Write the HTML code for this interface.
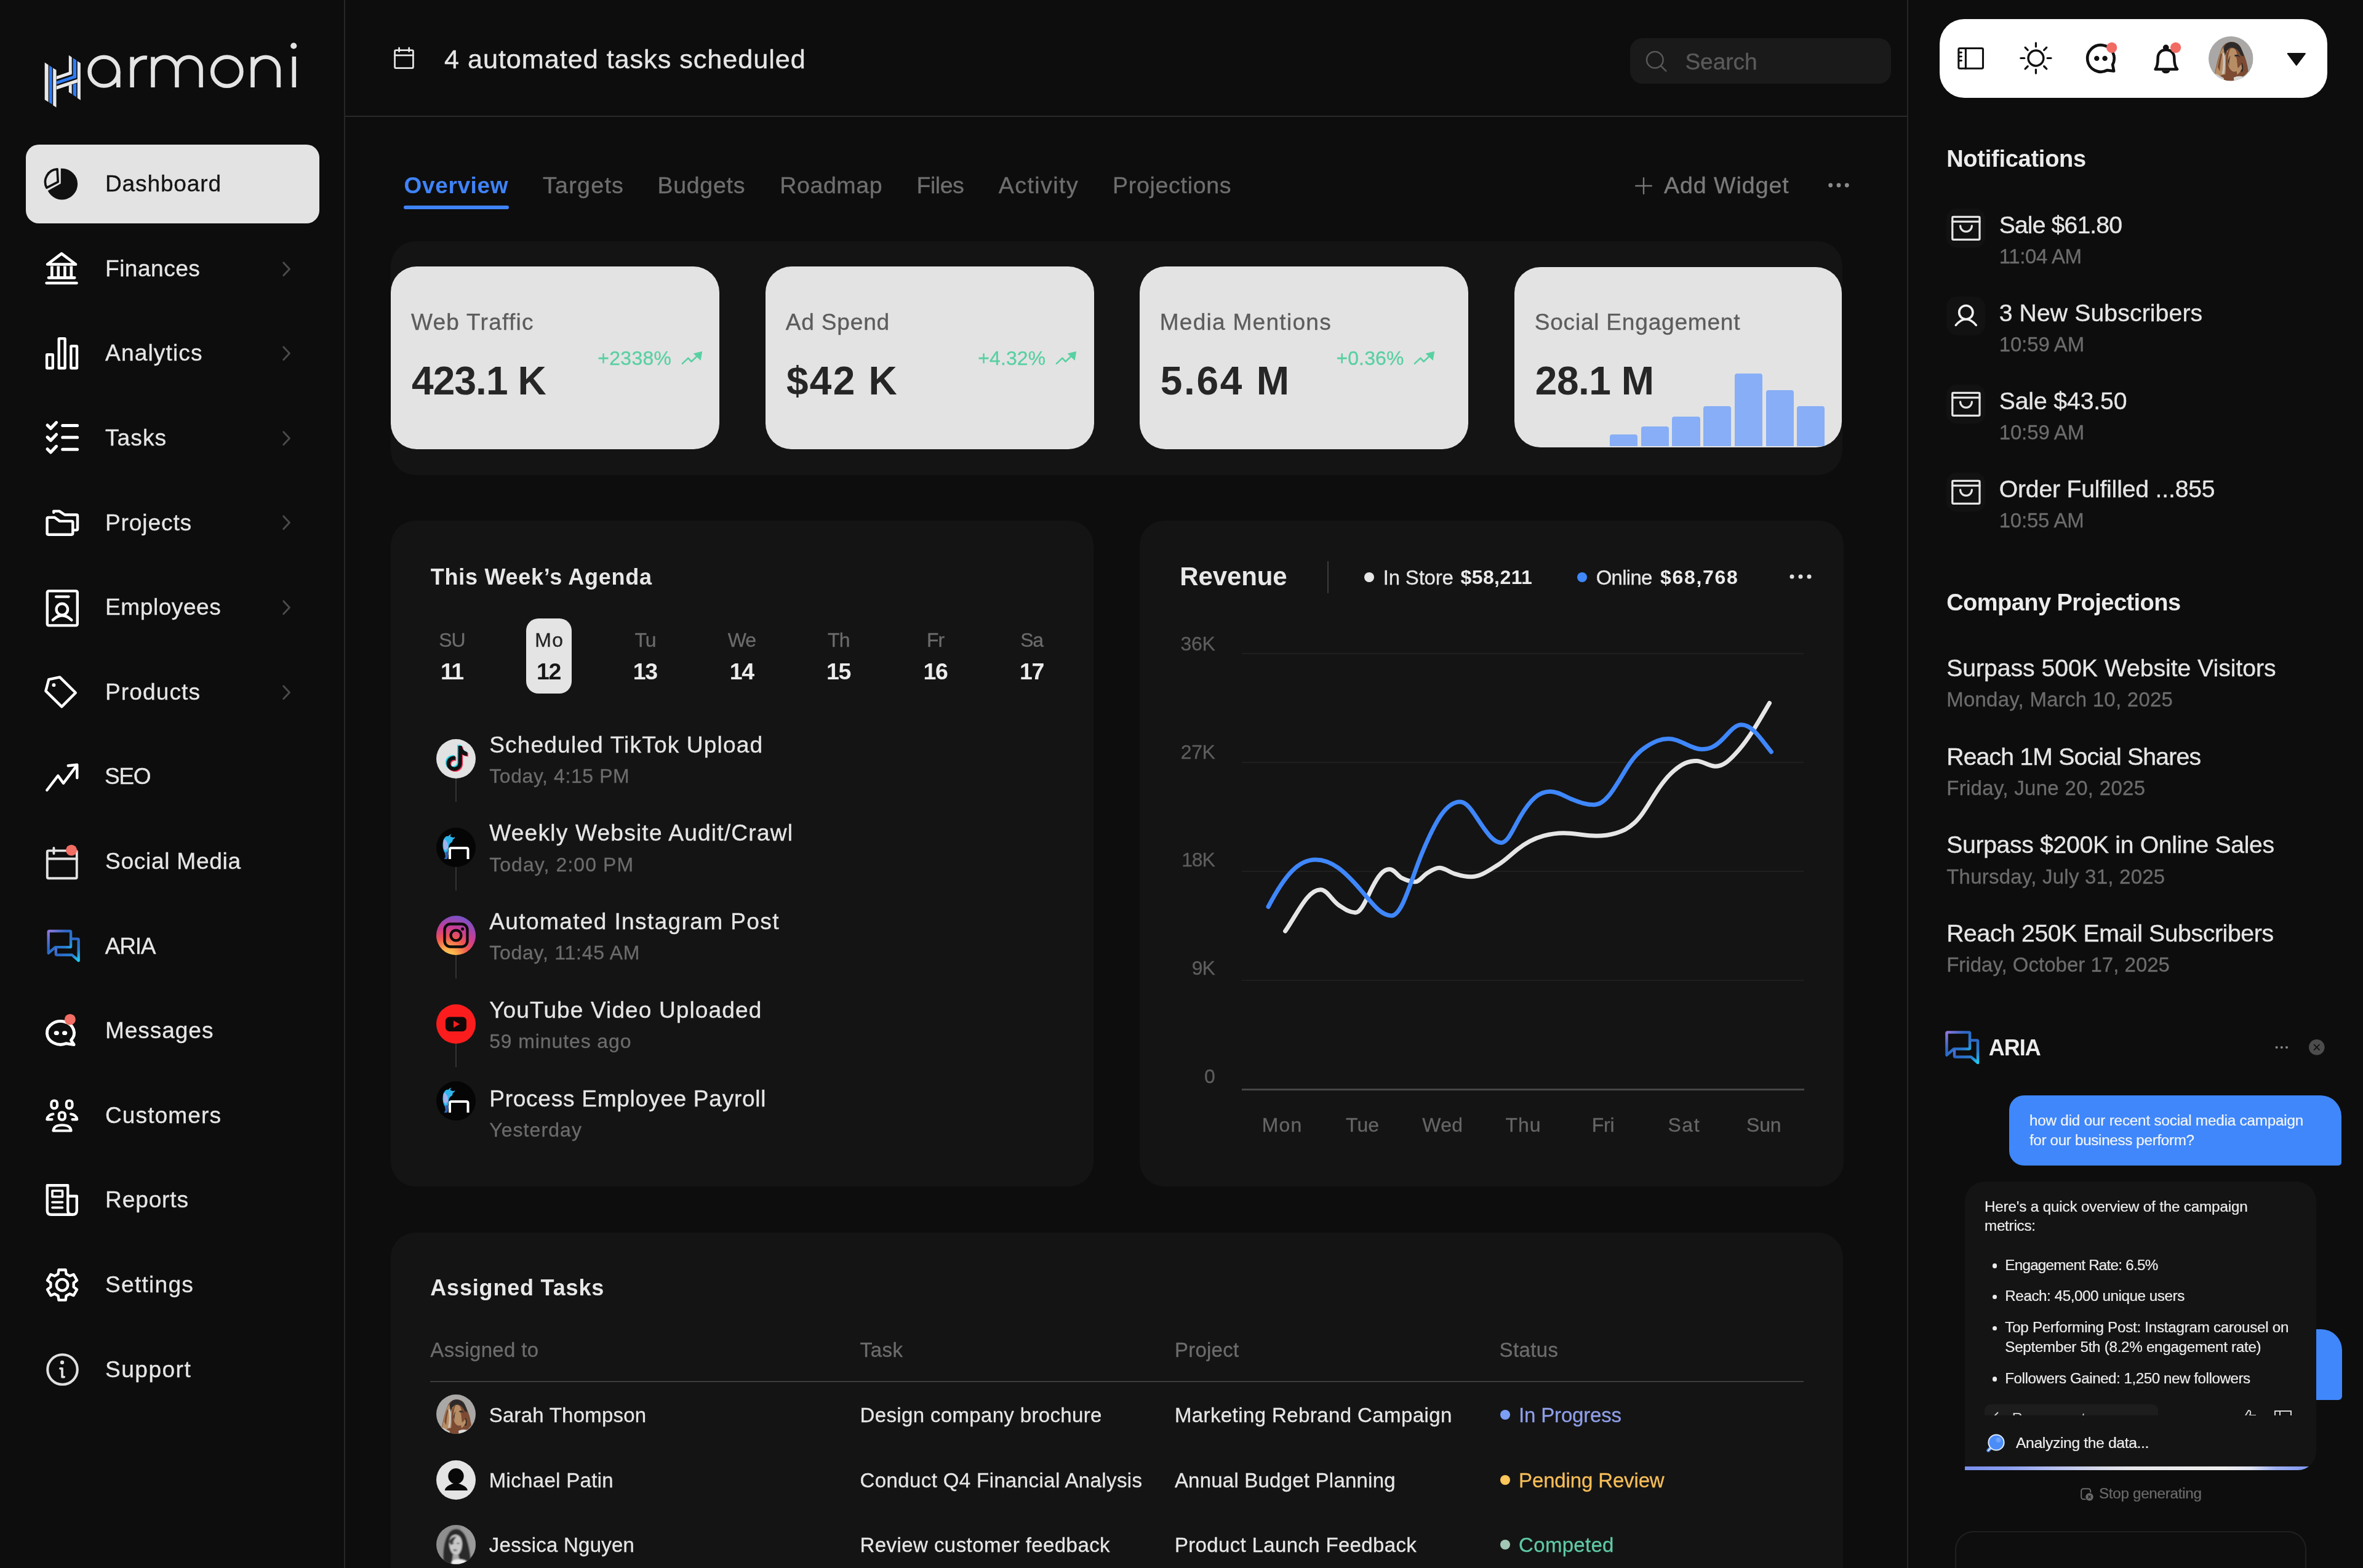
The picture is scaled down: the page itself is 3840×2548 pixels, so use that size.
<!DOCTYPE html><html lang="en"><head><meta charset="utf-8"><title>Harmoni Dashboard</title><style>
html{margin:0;padding:0;background:#0d0d0d;width:3840px;height:2548px;overflow:hidden;}
body{margin:0;padding:0;background:transparent;will-change:transform;width:3840px;height:2548px;overflow:hidden;position:relative;font-family:"Liberation Sans",sans-serif;}
.b{position:absolute;display:block;box-sizing:border-box;}
.t{position:absolute;display:block;white-space:nowrap;font-family:"Liberation Sans",sans-serif;font-weight:400;}
svg{overflow:visible;}
</style></head><body><aside id="sidebar"><div class="b" style="left:0;top:0;width:559px;height:2548px;border-right:2px solid #262626;box-sizing:content-box"></div><svg class="b" style="left:67.51px;top:65.39px;width:423.19px;height:114.26px;" viewBox="130 120 2000 540"><polygon points="152,293 180,311 180,596 152,578" fill="#e9e9e9"/><polygon points="186,315 209,330 209,614 186,600" fill="#2f7bf5"/><polygon points="216,335 241,351 241,638 216,622" fill="#e9e9e9"/><polygon points="337,237 360,252 360,372 337,380" fill="#e9e9e9"/><polygon points="337,470 360,462 360,535 337,520" fill="#e9e9e9"/><polygon points="369,258 395,275 395,398 369,407" fill="#2f7bf5"/><polygon points="369,462 395,454 395,558 369,542" fill="#2f7bf5"/><polygon points="403,282 427,297 427,582 403,566" fill="#e9e9e9"/><polygon points="243,398 360,358 360,383 243,423" fill="#e9e9e9"/><polygon points="243,437 395,386 395,411 243,462" fill="#2f7bf5"/><polygon points="243,473 403,420 403,447 243,500" fill="#e9e9e9"/><g fill="none" stroke="#e4e4e4" stroke-width="31"><circle cx="607" cy="362" r="110.5"/><path d="M717.5 362 V484"/><path d="M823 250 V484"/><path d="M823 351 A100 100 0 0 1 938 256"/><path d="M983 250 V484"/><path d="M983 343.5 A92 92 0 0 1 1167 343.5 V484"/><path d="M1167 343.5 A92.5 92.5 0 0 1 1352 343.5 V484"/><circle cx="1551.5" cy="362" r="111.5"/><path d="M1749 250 V484"/><path d="M1749 351 A100 100 0 0 1 1949 351 V484"/><path d="M2067 247 V484"/></g><circle cx="2064" cy="165" r="24" fill="#e4e4e4"/></svg><div class="b" style="left:42.4px;top:235px;width:476.6px;height:127.8px;background:#e3e3e3;border-radius:21px;"></div><svg class="b" style="left:72.12px;top:270.6px;width:58.15px;height:58.15px;" viewBox="50 85 240 240"><path d="M160.5 197.7 L160.5 96.6 A104.7 104.7 0 1 1 73.8 245.5 Z" fill="#111"/><path d="M141.6 186.3 L65.9 225.7 A85.3 85.3 0 0 1 137.1 101.1 Z" fill="none" stroke="#111" stroke-width="15" stroke-linejoin="round"/></svg><svg class="b" style="left:70.9px;top:406.77px;width:58.15px;height:58.15px;" viewBox="45 647 240 240"><g fill="none" stroke="#ffffff" stroke-width="19" stroke-linecap="round" stroke-linejoin="round"><path d="M70 740 L165 668 L260 740 Z"/><path d="M100 752 V822 M143 752 V822 M187 752 V822 M230 752 V822" stroke-linecap="butt"/><path d="M78 830 H252"/><path d="M64 866 H266"/></g></svg><svg class="b" style="left:70.9px;top:545.13px;width:58.15px;height:58.15px;" viewBox="45 1218 240 240"><g fill="none" stroke="#ffffff" stroke-width="18" stroke-linejoin="round"><rect x="66" y="1347" width="40" height="91" rx="3"/><rect x="147" y="1239" width="41" height="199" rx="3"/><rect x="228" y="1290" width="40" height="148" rx="3"/></g></svg><svg class="b" style="left:70.91px;top:680.61px;width:60.61px;height:60.61px;" viewBox="45 85 250 250"><g fill="none" stroke="#ffffff" stroke-width="21" stroke-linecap="round" stroke-linejoin="round"><path d="M70 126 L92 148 L130 108"/><path d="M172 128 H270"/><path d="M70 206 L92 228 L130 188"/><path d="M172 208 H270"/><path d="M70 286 L92 308 L130 268"/><path d="M172 288 H270"/></g></svg><svg class="b" style="left:70.91px;top:818.79px;width:60.61px;height:60.61px;" viewBox="45 655 250 250"><g fill="none" stroke="#ffffff" stroke-width="18" stroke-linecap="round" stroke-linejoin="round"><path d="M112 712 V703 H150 L186 727 H264 Q272 727 272 735 V822 Q272 830 264 830 H250"/><path d="M68 752 Q68 745 76 745 H118 L152 770 H232 Q240 770 240 778 V852 Q240 860 232 860 H76 Q68 860 68 852 Z"/></g></svg><svg class="b" style="left:70.91px;top:956.97px;width:60.61px;height:63.52px;" viewBox="45 1225 250 262"><g fill="none" stroke="#ffffff" stroke-width="18" stroke-linecap="round" stroke-linejoin="round"><rect x="69" y="1239" width="202" height="231" rx="10"/><path d="M128 1277 H212"/><circle cx="168" cy="1362" r="38"/><path d="M106 1434 Q168 1372 232 1434"/></g></svg><svg class="b" style="left:69.7px;top:1094.55px;width:60.61px;height:60.61px;" viewBox="40 60 250 250"><g fill="none" stroke="#ffffff" stroke-width="18" stroke-linecap="round" stroke-linejoin="round"><path d="M78 98 L152 82 L258 187 L165 280 L58 175 Z"/></g><circle cx="112" cy="135" r="12" fill="#ffffff"/></svg><svg class="b" style="left:69.7px;top:1235.15px;width:60.61px;height:60.61px;" viewBox="40 640 250 250"><g fill="none" stroke="#ffffff" stroke-width="18" stroke-linecap="round" stroke-linejoin="round"><path d="M66 842 L140 745 L176 796 L262 682"/><path d="M208 678 L268 672 L268 760"/></g></svg><svg class="b" style="left:69.7px;top:1369.7px;width:63.03px;height:63.03px;" viewBox="40 1195 260 260"><g fill="none" stroke="#e2e2e2" stroke-width="16" stroke-linecap="round" stroke-linejoin="round"><rect x="68" y="1246" width="198" height="185" rx="8"/><path d="M68 1300 H266"/><path d="M112 1228 V1265"/></g><circle cx="230" cy="1243" r="37" fill="#f26d63"/></svg><svg class="b" style="left:69.7px;top:1505.45px;width:65.45px;height:63.03px;" viewBox="40 105 270 260"><defs><linearGradient id="ag" x1="0" y1="0" x2="1" y2="1"><stop offset="0" stop-color="#9078da"/><stop offset=".4" stop-color="#2c66c6"/><stop offset=".75" stop-color="#2a7fd0"/><stop offset="1" stop-color="#1fcdf2"/></linearGradient></defs><g fill="none" stroke="url(#ag)" stroke-width="18" stroke-linejoin="round" stroke-linecap="round"><path d="M82 138 H220 Q226 138 226 144 V240 Q226 246 220 246 H122 L76 286 V144 Q76 138 82 138 Z"/><path d="M236 190 H272 Q278 190 278 196 V336 L234 298 H132 Q126 298 126 292 V258"/></g></svg><svg class="b" style="left:69.7px;top:1644.85px;width:63.03px;height:63.03px;" viewBox="40 680 260 260"><g fill="none" stroke="#ffffff" stroke-width="20" stroke-linecap="round" stroke-linejoin="round"><path d="M227.5 867.5 A91 78 0 1 0 195.5 888.7 L247 897 Z"/></g><ellipse cx="130" cy="819" rx="17" ry="14" fill="#ffffff"/><ellipse cx="185" cy="819" rx="17" ry="14" fill="#ffffff"/><circle cx="221" cy="728" r="37" fill="#f26d63"/></svg><svg class="b" style="left:69.7px;top:1781.82px;width:63.03px;height:60.61px;" viewBox="40 1245 260 250"><g fill="none" stroke="#ffffff" stroke-width="17" stroke-linecap="round" stroke-linejoin="round"><rect x="95" y="1272" width="40" height="52" rx="18"/><rect x="196" y="1272" width="40" height="52" rx="18"/><rect x="146" y="1350" width="42" height="50" rx="18"/><path d="M108 1362 Q72 1366 66 1398 H100"/><path d="M226 1362 Q262 1366 268 1398 H236"/><path d="M108 1474 Q112 1436 168 1436 Q224 1436 228 1474 Z"/></g></svg><svg class="b" style="left:69.7px;top:1919.09px;width:63.03px;height:63.03px;" viewBox="40 120 260 260"><g fill="none" stroke="#ffffff" stroke-width="18" stroke-linecap="round" stroke-linejoin="round"><path d="M68 150 H206 V318 Q206 346 236 346 H94 Q68 346 68 320 Z"/><path d="M206 222 H266 V318 Q266 346 236 346"/><rect x="102" y="186" width="68" height="40" stroke-width="15"/><path d="M102 263 H170 M102 299 H170" stroke-width="15"/></g></svg><svg class="b" style="left:69.7px;top:2057.27px;width:63.03px;height:63.03px;" viewBox="40 690 260 260"><g fill="none" stroke="#ffffff" stroke-width="18" stroke-linejoin="round"><path d="M195.0 891.2 L191.0 919.4 L145.0 919.4 L141.0 891.2 L118.1 878.0 L91.6 888.6 L68.7 848.8 L91.1 831.2 L91.1 804.8 L68.7 787.2 L91.6 747.4 L118.1 758.0 L141.0 744.8 L145.0 716.6 L191.0 716.6 L195.0 744.8 L217.9 758.0 L244.4 747.4 L267.3 787.2 L244.9 804.8 L244.9 831.2 L267.3 848.8 L244.4 888.6 L217.9 878.0Z"/><circle cx="168" cy="818" r="38"/></g></svg><svg class="b" style="left:69.7px;top:2195.45px;width:63.03px;height:63.03px;" viewBox="40 1260 260 260"><circle cx="170" cy="1386" r="100" fill="none" stroke="#e0e0e0" stroke-width="17"/><circle cx="168" cy="1338" r="13" fill="#e0e0e0"/><path d="M155 1379 H168 V1436 H181" fill="none" stroke="#e0e0e0" stroke-width="15" stroke-linecap="round" stroke-linejoin="round"/></svg><span class="t" style="left:171px;top:275.14px;font-size:37.08px;line-height:46px;color:#141414;-webkit-text-stroke:0.33px;letter-spacing:0.83px;">Dashboard</span><span class="t" style="left:171px;top:412.74px;font-size:37.08px;line-height:46px;color:#e6e6e6;-webkit-text-stroke:0.33px;letter-spacing:0.49px;">Finances</span><svg class="b" style="left:452px;top:415.6px;width:30px;height:40px;" viewBox="0 0 30 40"><path d="M8.8 10.9 L18.4 21.25 L8.8 31.6" fill="none" stroke="#4a4a4a" stroke-width="3" stroke-linecap="round" stroke-linejoin="round"/></svg><span class="t" style="left:171px;top:550.34px;font-size:37.08px;line-height:46px;color:#e6e6e6;-webkit-text-stroke:0.33px;letter-spacing:1.15px;">Analytics</span><svg class="b" style="left:452px;top:553.2px;width:30px;height:40px;" viewBox="0 0 30 40"><path d="M8.8 10.9 L18.4 21.25 L8.8 31.6" fill="none" stroke="#4a4a4a" stroke-width="3" stroke-linecap="round" stroke-linejoin="round"/></svg><span class="t" style="left:171px;top:687.94px;font-size:37.08px;line-height:46px;color:#e6e6e6;-webkit-text-stroke:0.33px;letter-spacing:1.07px;">Tasks</span><svg class="b" style="left:452px;top:690.8px;width:30px;height:40px;" viewBox="0 0 30 40"><path d="M8.8 10.9 L18.4 21.25 L8.8 31.6" fill="none" stroke="#4a4a4a" stroke-width="3" stroke-linecap="round" stroke-linejoin="round"/></svg><span class="t" style="left:171px;top:825.54px;font-size:37.08px;line-height:46px;color:#e6e6e6;-webkit-text-stroke:0.33px;letter-spacing:0.88px;">Projects</span><svg class="b" style="left:452px;top:828.4px;width:30px;height:40px;" viewBox="0 0 30 40"><path d="M8.8 10.9 L18.4 21.25 L8.8 31.6" fill="none" stroke="#4a4a4a" stroke-width="3" stroke-linecap="round" stroke-linejoin="round"/></svg><span class="t" style="left:171px;top:963.14px;font-size:37.08px;line-height:46px;color:#e6e6e6;-webkit-text-stroke:0.33px;letter-spacing:0.55px;">Employees</span><svg class="b" style="left:452px;top:966px;width:30px;height:40px;" viewBox="0 0 30 40"><path d="M8.8 10.9 L18.4 21.25 L8.8 31.6" fill="none" stroke="#4a4a4a" stroke-width="3" stroke-linecap="round" stroke-linejoin="round"/></svg><span class="t" style="left:171px;top:1100.74px;font-size:37.08px;line-height:46px;color:#e6e6e6;-webkit-text-stroke:0.33px;letter-spacing:1.1px;">Products</span><svg class="b" style="left:452px;top:1103.6px;width:30px;height:40px;" viewBox="0 0 30 40"><path d="M8.8 10.9 L18.4 21.25 L8.8 31.6" fill="none" stroke="#4a4a4a" stroke-width="3" stroke-linecap="round" stroke-linejoin="round"/></svg><span class="t" style="left:169.94px;top:1238.34px;font-size:37.08px;line-height:46px;color:#e6e6e6;-webkit-text-stroke:0.33px;letter-spacing:-1.3px;">SEO</span><span class="t" style="left:171px;top:1375.94px;font-size:37.08px;line-height:46px;color:#e6e6e6;-webkit-text-stroke:0.33px;letter-spacing:0.72px;">Social Media</span><span class="t" style="left:170.73px;top:1513.54px;font-size:37.08px;line-height:46px;color:#e6e6e6;-webkit-text-stroke:0.33px;letter-spacing:-1.3px;">ARIA</span><span class="t" style="left:171px;top:1651.14px;font-size:37.08px;line-height:46px;color:#e6e6e6;-webkit-text-stroke:0.33px;letter-spacing:0.92px;">Messages</span><span class="t" style="left:171px;top:1788.74px;font-size:37.08px;line-height:46px;color:#e6e6e6;-webkit-text-stroke:0.33px;letter-spacing:1.09px;">Customers</span><span class="t" style="left:171px;top:1926.34px;font-size:37.08px;line-height:46px;color:#e6e6e6;-webkit-text-stroke:0.33px;letter-spacing:0.87px;">Reports</span><span class="t" style="left:171px;top:2063.94px;font-size:37.08px;line-height:46px;color:#e6e6e6;-webkit-text-stroke:0.33px;letter-spacing:1.27px;">Settings</span><span class="t" style="left:171px;top:2201.54px;font-size:37.08px;line-height:46px;color:#e6e6e6;-webkit-text-stroke:0.33px;letter-spacing:1.47px;">Support</span></aside><header id="top"><svg class="b" style="left:636.76px;top:73.52px;width:39.61px;height:41.13px;" viewBox="55 110 130 135"><g fill="none" stroke="#e6e6e6" stroke-width="9" stroke-linejoin="round" stroke-linecap="round"><rect x="70" y="135" width="98" height="95" rx="6"/><path d="M70 162 H168"/><path d="M93 123 V142 M146 123 V142"/></g></svg><span class="t" style="left:722px;top:68.52px;font-size:43.26px;line-height:54px;color:#e6e6e6;-webkit-text-stroke:0.39px;letter-spacing:0.93px;">4 automated tasks scheduled</span><div class="b" style="left:561px;top:188.2px;width:2539px;height:2px;background:#2a2a2a;"></div><div class="b" style="left:2648.9px;top:62.3px;width:423.7px;height:74.2px;background:#1a1a1a;border-radius:20px;"></div><svg class="b" style="left:2674px;top:82px;width:36px;height:36px;" viewBox="0 0 36 36"><circle cx="15.3" cy="15.3" r="13.3" fill="none" stroke="#585858" stroke-width="2.5"/><path d="M25 25 L33.3 33.3" stroke="#585858" stroke-width="2.5" stroke-linecap="round"/></svg><span class="t" style="left:2738.4px;top:76.54px;font-size:37.08px;line-height:46px;color:#5a5a5a;-webkit-text-stroke:0.33px;letter-spacing:-0.05px;">Search</span><span class="t" style="left:656.6px;top:278.94px;font-size:37px;line-height:46px;color:#3f83f8;font-weight:700;letter-spacing:0.62px;">Overview</span><span class="t" style="left:882px;top:278.45px;font-size:37.59px;line-height:47px;color:#6e6e6e;-webkit-text-stroke:0.34px;letter-spacing:1.28px;">Targets</span><span class="t" style="left:1068.4px;top:278.45px;font-size:37.59px;line-height:47px;color:#6e6e6e;-webkit-text-stroke:0.34px;letter-spacing:0.7px;">Budgets</span><span class="t" style="left:1267.3px;top:278.45px;font-size:37.59px;line-height:47px;color:#6e6e6e;-webkit-text-stroke:0.34px;letter-spacing:0.55px;">Roadmap</span><span class="t" style="left:1489.4px;top:278.45px;font-size:37.59px;line-height:47px;color:#6e6e6e;-webkit-text-stroke:0.34px;letter-spacing:-0.46px;">Files</span><span class="t" style="left:1622.7px;top:278.45px;font-size:37.59px;line-height:47px;color:#6e6e6e;-webkit-text-stroke:0.34px;letter-spacing:1.43px;">Activity</span><span class="t" style="left:1808.1px;top:278.45px;font-size:37.59px;line-height:47px;color:#6e6e6e;-webkit-text-stroke:0.34px;letter-spacing:0.66px;">Projections</span><div class="b" style="left:656px;top:334px;width:171px;height:5.6px;background:#3f83f8;border-radius:3px;"></div><svg class="b" style="left:2657px;top:287.5px;width:28px;height:28px;" viewBox="0 0 28 28"><path d="M14 1.2 V26.8 M1.2 14 H26.8" stroke="#777" stroke-width="2.4" stroke-linecap="round"/></svg><span class="t" style="left:2704px;top:278.05px;font-size:37.59px;line-height:47px;color:#7a7a7a;-webkit-text-stroke:0.34px;letter-spacing:0.95px;">Add Widget</span><svg class="b" style="left:2970px;top:295.2px;width:38px;height:12px;" viewBox="0 0 38 12"><circle cx="4.7" cy="6" r="3.4" fill="#8c8c8c"/><circle cx="18" cy="6" r="3.4" fill="#8c8c8c"/><circle cx="31.3" cy="6" r="3.4" fill="#8c8c8c"/></svg><div class="b" style="left:634.5px;top:391.5px;width:2359.5px;height:380.5px;background:#141414;border-radius:40px;"></div><div class="b" style="left:634.7px;top:433.3px;width:534.6px;height:296.4px;background:#e3e3e3;border-radius:42px;"></div><span class="t" style="left:667.9px;top:500.44px;font-size:37.08px;line-height:46px;color:#5c5c5c;-webkit-text-stroke:0.33px;letter-spacing:1.25px;">Web Traffic</span><span class="t" style="left:669px;top:579.37px;font-size:64px;line-height:80px;color:#262626;font-weight:700;letter-spacing:-0.89px;">423.1 K</span><span class="t" style="left:971.3px;top:561.78px;font-size:31.93px;line-height:40px;color:#58d0a2;-webkit-text-stroke:0.29px;letter-spacing:0.31px;">+2338%</span><svg class="b" style="left:1106.5px;top:570px;width:36px;height:24px;" viewBox="2014 632 151.91 101.27"><path d="M2022 720 L2062 682 L2084 706 L2128 664" fill="none" stroke="#58d0a2" stroke-width="11" stroke-linecap="round" stroke-linejoin="round"/><path d="M2100 652 L2156 638 L2146 696 Z" fill="#58d0a2" stroke="#58d0a2" stroke-width="4" stroke-linejoin="round"/></svg><div class="b" style="left:1243.6px;top:433.3px;width:534.6px;height:296.4px;background:#e3e3e3;border-radius:42px;"></div><span class="t" style="left:1276.8px;top:500.44px;font-size:37.08px;line-height:46px;color:#5c5c5c;-webkit-text-stroke:0.33px;letter-spacing:0.79px;">Ad Spend</span><span class="t" style="left:1277.9px;top:579.37px;font-size:64px;line-height:80px;color:#262626;font-weight:700;letter-spacing:2.28px;">$42 K</span><span class="t" style="left:1589.2px;top:561.78px;font-size:31.93px;line-height:40px;color:#58d0a2;-webkit-text-stroke:0.29px;letter-spacing:0.16px;">+4.32%</span><svg class="b" style="left:1714.7px;top:570px;width:36px;height:24px;" viewBox="2014 632 151.91 101.27"><path d="M2022 720 L2062 682 L2084 706 L2128 664" fill="none" stroke="#58d0a2" stroke-width="11" stroke-linecap="round" stroke-linejoin="round"/><path d="M2100 652 L2156 638 L2146 696 Z" fill="#58d0a2" stroke="#58d0a2" stroke-width="4" stroke-linejoin="round"/></svg><div class="b" style="left:1851.5px;top:433.3px;width:534.6px;height:296.4px;background:#e3e3e3;border-radius:42px;"></div><span class="t" style="left:1884.7px;top:500.44px;font-size:37.08px;line-height:46px;color:#5c5c5c;-webkit-text-stroke:0.33px;letter-spacing:1.25px;">Media Mentions</span><span class="t" style="left:1885.8px;top:579.37px;font-size:64px;line-height:80px;color:#262626;font-weight:700;letter-spacing:2.7px;">5.64 M</span><span class="t" style="left:2171.4px;top:561.78px;font-size:31.93px;line-height:40px;color:#58d0a2;-webkit-text-stroke:0.29px;letter-spacing:0.16px;">+0.36%</span><svg class="b" style="left:2296.9px;top:570px;width:36px;height:24px;" viewBox="2014 632 151.91 101.27"><path d="M2022 720 L2062 682 L2084 706 L2128 664" fill="none" stroke="#58d0a2" stroke-width="11" stroke-linecap="round" stroke-linejoin="round"/><path d="M2100 652 L2156 638 L2146 696 Z" fill="#58d0a2" stroke="#58d0a2" stroke-width="4" stroke-linejoin="round"/></svg><div class="b" style="left:2461.3px;top:434px;width:531.5px;height:293.4px;background:#e3e3e3;border-radius:42px;"></div><span class="t" style="left:2493.7px;top:500.44px;font-size:37.08px;line-height:46px;color:#5c5c5c;-webkit-text-stroke:0.33px;letter-spacing:0.77px;">Social Engagement</span><span class="t" style="left:2494.8px;top:579.37px;font-size:64px;line-height:80px;color:#262626;font-weight:700;letter-spacing:-0.5px;">28.1 M</span><div class="b" style="left:2616px;top:705.8px;width:45.3px;height:18.8px;background:#87aef6;border-radius:4px 4px 0 0;"></div><div class="b" style="left:2666.7px;top:692.6px;width:45.3px;height:32px;background:#87aef6;border-radius:4px 4px 0 0;"></div><div class="b" style="left:2717.4px;top:676.7px;width:45.3px;height:47.9px;background:#87aef6;border-radius:4px 4px 0 0;"></div><div class="b" style="left:2768.1px;top:660.2px;width:45.3px;height:64.4px;background:#87aef6;border-radius:4px 4px 0 0;"></div><div class="b" style="left:2818.8px;top:606.8px;width:45.3px;height:117.8px;background:#87aef6;border-radius:4px 4px 0 0;"></div><div class="b" style="left:2869.5px;top:633.8px;width:45.3px;height:90.8px;background:#87aef6;border-radius:4px 4px 0 0;"></div><div class="b" style="left:2920.2px;top:660.2px;width:45.3px;height:64.4px;background:#87aef6;border-radius:4px 4px 0 0;"></div></header><main id="content"><div class="b" style="left:634.5px;top:846px;width:1142.5px;height:1081.7px;background:#141414;border-radius:40px;"></div><span class="t" style="left:699.8px;top:915.03px;font-size:36px;line-height:45px;color:#e8e8e8;font-weight:700;letter-spacing:0.73px;">This Week’s Agenda</span><div class="b" style="left:855.2px;top:1004.9px;width:74px;height:122.5px;background:#e4e4e4;border-radius:20px;"></div><span class="t" style="left:713.37px;top:1020.28px;font-size:31.93px;line-height:40px;color:#6c6c6c;-webkit-text-stroke:0.29px;letter-spacing:-1.12px;">SU</span><span class="t" style="left:715.88px;top:1067.65px;font-size:37.5px;line-height:47px;color:#ececec;font-weight:700;letter-spacing:-1.31px;">11</span><span class="t" style="left:869.35px;top:1020.28px;font-size:31.93px;line-height:40px;color:#222;-webkit-text-stroke:0.29px;letter-spacing:1.32px;">Mo</span><span class="t" style="left:872.04px;top:1067.65px;font-size:37.5px;line-height:47px;color:#161616;font-weight:700;letter-spacing:-1.31px;">12</span><span class="t" style="left:1031.52px;top:1020.28px;font-size:31.93px;line-height:40px;color:#6c6c6c;-webkit-text-stroke:0.29px;letter-spacing:-1.12px;">Tu</span><span class="t" style="left:1028.84px;top:1067.65px;font-size:37.5px;line-height:47px;color:#ececec;font-weight:700;letter-spacing:-1.31px;">13</span><span class="t" style="left:1182.73px;top:1020.28px;font-size:31.93px;line-height:40px;color:#6c6c6c;-webkit-text-stroke:0.29px;letter-spacing:-1.12px;">We</span><span class="t" style="left:1185.64px;top:1067.65px;font-size:37.5px;line-height:47px;color:#ececec;font-weight:700;letter-spacing:-1.31px;">14</span><span class="t" style="left:1344.9px;top:1020.28px;font-size:31.93px;line-height:40px;color:#6c6c6c;-webkit-text-stroke:0.29px;letter-spacing:-0.6px;">Th</span><span class="t" style="left:1343.04px;top:1067.65px;font-size:37.5px;line-height:47px;color:#ececec;font-weight:700;letter-spacing:-1.31px;">15</span><span class="t" style="left:1506.07px;top:1020.28px;font-size:31.93px;line-height:40px;color:#6c6c6c;-webkit-text-stroke:0.29px;letter-spacing:-1.12px;">Fr</span><span class="t" style="left:1500.44px;top:1067.65px;font-size:37.5px;line-height:47px;color:#ececec;font-weight:700;letter-spacing:-1.31px;">16</span><span class="t" style="left:1658.2px;top:1020.28px;font-size:31.93px;line-height:40px;color:#6c6c6c;-webkit-text-stroke:0.29px;letter-spacing:-1.12px;">Sa</span><span class="t" style="left:1657.04px;top:1067.65px;font-size:37.5px;line-height:47px;color:#ececec;font-weight:700;letter-spacing:-1.31px;">17</span><span class="t" style="left:795.2px;top:1186.54px;font-size:37.08px;line-height:46px;color:#e6e6e6;-webkit-text-stroke:0.33px;letter-spacing:1.16px;">Scheduled TikTok Upload</span><span class="t" style="left:795.2px;top:1240.78px;font-size:31.93px;line-height:40px;color:#6c6c6c;-webkit-text-stroke:0.29px;letter-spacing:0.62px;">Today, 4:15 PM</span><div class="b" style="left:739.8px;top:1265.1px;width:2.1px;height:37.5px;background:#343434;"></div><span class="t" style="left:795.2px;top:1330.39px;font-size:37.08px;line-height:46px;color:#e6e6e6;-webkit-text-stroke:0.33px;letter-spacing:1.22px;">Weekly Website Audit/Crawl</span><span class="t" style="left:795.2px;top:1384.63px;font-size:31.93px;line-height:40px;color:#6c6c6c;-webkit-text-stroke:0.29px;letter-spacing:1.11px;">Today, 2:00 PM</span><div class="b" style="left:739.8px;top:1409.2px;width:2.1px;height:37.5px;background:#343434;"></div><span class="t" style="left:795.2px;top:1474.24px;font-size:37.08px;line-height:46px;color:#e6e6e6;-webkit-text-stroke:0.33px;letter-spacing:1.36px;">Automated Instagram Post</span><span class="t" style="left:795.2px;top:1528.48px;font-size:31.93px;line-height:40px;color:#6c6c6c;-webkit-text-stroke:0.29px;letter-spacing:0.79px;">Today, 11:45 AM</span><div class="b" style="left:739.8px;top:1552.4px;width:2.1px;height:37.5px;background:#343434;"></div><span class="t" style="left:795.2px;top:1618.09px;font-size:37.08px;line-height:46px;color:#e6e6e6;-webkit-text-stroke:0.33px;letter-spacing:1.09px;">YouTube Video Uploaded</span><span class="t" style="left:795.2px;top:1672.33px;font-size:31.93px;line-height:40px;color:#6c6c6c;-webkit-text-stroke:0.29px;letter-spacing:0.92px;">59 minutes ago</span><div class="b" style="left:739.8px;top:1696.2px;width:2.1px;height:37.5px;background:#343434;"></div><span class="t" style="left:795.2px;top:1761.94px;font-size:37.08px;line-height:46px;color:#e6e6e6;-webkit-text-stroke:0.33px;letter-spacing:0.72px;">Process Employee Payroll</span><span class="t" style="left:795.2px;top:1816.18px;font-size:31.93px;line-height:40px;color:#6c6c6c;-webkit-text-stroke:0.29px;letter-spacing:1.11px;">Yesterday</span><svg class="b" style="left:708.6px;top:1201.1px;width:64px;height:64px;" viewBox="0 0 64 64"><circle cx="32" cy="32" r="32" fill="#e2e2e2"/><g transform="translate(32 32.6) scale(1.14) translate(-33 -31.5)"><path d="M36.3 12.5 h5.2 c0.4 4.6 3 8 7.6 8.8 v5.4 c-2.9 0 -5.5 -0.9 -7.6 -2.4 v12.6 c0 6.6 -5 11.3 -11.2 11.3 c-6.2 0 -10.8 -4.8 -10.8 -10.6 c0 -6.6 5.6 -11.4 12.4 -10.5 v5.6 c-3.4 -0.9 -6.9 1.2 -6.9 4.9 c0 3 2.4 5.2 5.2 5.2 c3.2 0 5.9 -2.3 5.9 -6 z" fill="#25d8ee" transform="translate(-1.5,-1.2)"/><path d="M36.3 12.5 h5.2 c0.4 4.6 3 8 7.6 8.8 v5.4 c-2.9 0 -5.5 -0.9 -7.6 -2.4 v12.6 c0 6.6 -5 11.3 -11.2 11.3 c-6.2 0 -10.8 -4.8 -10.8 -10.6 c0 -6.6 5.6 -11.4 12.4 -10.5 v5.6 c-3.4 -0.9 -6.9 1.2 -6.9 4.9 c0 3 2.4 5.2 5.2 5.2 c3.2 0 5.9 -2.3 5.9 -6 z" fill="#fb2c53" transform="translate(1.3,1.3)"/><path d="M36.3 12.5 h5.2 c0.4 4.6 3 8 7.6 8.8 v5.4 c-2.9 0 -5.5 -0.9 -7.6 -2.4 v12.6 c0 6.6 -5 11.3 -11.2 11.3 c-6.2 0 -10.8 -4.8 -10.8 -10.6 c0 -6.6 5.6 -11.4 12.4 -10.5 v5.6 c-3.4 -0.9 -6.9 1.2 -6.9 4.9 c0 3 2.4 5.2 5.2 5.2 c3.2 0 5.9 -2.3 5.9 -6 z" fill="#111"/></g></svg><svg class="b" style="left:708.6px;top:1345.2px;width:64px;height:64px;" viewBox="0 0 64 64"><circle cx="32" cy="32" r="32" fill="#050505"/><path d="M22 51 V35.5 Q22 33 24.5 33 H49 Q51.5 33 51.5 35.5 V51" fill="none" stroke="#fff" stroke-width="4"/><path d="M13 17 L16 14 L20 13.5 Q21 11 25 10.5 Q22 12.5 23 14.5 L27 16 Q29.5 16 30 14.5 Q30.5 18 27 19 L26 23 L22.5 25.5 L20.5 29 L20 33 L19 38 L19.5 43 L18 50.5 L13 51 L15 47 L14 41 Q10.5 36 10.5 28 Q10.5 21 13 17 Z" fill="#2fb5ea"/><path d="M12 20 Q10.5 27 12 34 L15.5 37 L19.5 32 L18.5 25 L14.5 19 Z" fill="#9fb3ef"/><path d="M14.5 40 L19.5 38.5 L19.5 43 L18 50.5 L13 51 L15 47 Z" fill="#2d62b8"/></svg><svg class="b" style="left:708.6px;top:1488.4px;width:64px;height:64px;" viewBox="0 0 64 64"><defs><radialGradient id="ig1" cx="0.3" cy="1.07" r="1.25"><stop offset="0" stop-color="#fdd86a"/><stop offset=".18" stop-color="#fbb04a"/><stop offset=".42" stop-color="#f0544f"/><stop offset=".62" stop-color="#c93c93"/><stop offset=".85" stop-color="#7f50c4"/><stop offset="1" stop-color="#5b62d8"/></radialGradient></defs><circle cx="32" cy="32" r="32" fill="url(#ig1)"/><rect x="13.5" y="13.5" width="37" height="37" rx="9.5" fill="none" stroke="#0c0c0c" stroke-width="4.4"/><circle cx="32" cy="32" r="8.4" fill="none" stroke="#0c0c0c" stroke-width="4.4"/><circle cx="42.6" cy="21.6" r="2.6" fill="#0c0c0c"/></svg><svg class="b" style="left:708.6px;top:1632.2px;width:64px;height:64px;" viewBox="0 0 64 64"><circle cx="32" cy="32" r="32" fill="#fb1d1d"/><rect x="15" y="20.5" width="34" height="23.5" rx="6.5" fill="#120808"/><path d="M28 26.5 L38 32.2 L28 38 Z" fill="#fb1d1d"/></svg><svg class="b" style="left:708.6px;top:1757.1px;width:64px;height:64px;" viewBox="0 0 64 64"><circle cx="32" cy="32" r="32" fill="#050505"/><path d="M22 51 V35.5 Q22 33 24.5 33 H49 Q51.5 33 51.5 35.5 V51" fill="none" stroke="#fff" stroke-width="4"/><path d="M13 17 L16 14 L20 13.5 Q21 11 25 10.5 Q22 12.5 23 14.5 L27 16 Q29.5 16 30 14.5 Q30.5 18 27 19 L26 23 L22.5 25.5 L20.5 29 L20 33 L19 38 L19.5 43 L18 50.5 L13 51 L15 47 L14 41 Q10.5 36 10.5 28 Q10.5 21 13 17 Z" fill="#2fb5ea"/><path d="M12 20 Q10.5 27 12 34 L15.5 37 L19.5 32 L18.5 25 L14.5 19 Z" fill="#9fb3ef"/><path d="M14.5 40 L19.5 38.5 L19.5 43 L18 50.5 L13 51 L15 47 Z" fill="#2d62b8"/></svg><div class="b" style="left:1852px;top:846px;width:1143.5px;height:1081.7px;background:#141414;border-radius:40px;"></div><span class="t" style="left:1917.2px;top:911.2px;font-size:42px;line-height:52px;color:#e8e8e8;font-weight:700;letter-spacing:-0.09px;">Revenue</span><div class="b" style="left:2156.8px;top:911.5px;width:2.4px;height:52.5px;background:#3c3c3c;"></div><div class="b" style="left:2217.4px;top:930.2px;width:16px;height:16px;background:#e6e6e6;border-radius:8px;"></div><span class="t" style="left:2247.8px;top:917.8px;font-size:32.96px;line-height:41px;color:#e6e6e6;-webkit-text-stroke:0.3px;letter-spacing:-0.19px;">In Store</span><span class="t" style="left:2373.5px;top:918.28px;font-size:32px;line-height:40px;color:#ececec;font-weight:700;letter-spacing:0.41px;">$58,211</span><div class="b" style="left:2563.3px;top:930.2px;width:16px;height:16px;background:#3f87fb;border-radius:8px;"></div><span class="t" style="left:2593.7px;top:917.8px;font-size:32.96px;line-height:41px;color:#e6e6e6;-webkit-text-stroke:0.3px;letter-spacing:-0.71px;">Online</span><span class="t" style="left:2698px;top:918.28px;font-size:32px;line-height:40px;color:#ececec;font-weight:700;letter-spacing:1.67px;">$68,768</span><svg class="b" style="left:2907px;top:931px;width:38px;height:12px;" viewBox="0 0 38 12"><circle cx="5" cy="6" r="3.5" fill="#e0e0e0"/><circle cx="19" cy="6" r="3.5" fill="#e0e0e0"/><circle cx="33" cy="6" r="3.5" fill="#e0e0e0"/></svg><span class="t" style="left:1918.5px;top:1026.28px;font-size:31.93px;line-height:40px;color:#5e5e5e;-webkit-text-stroke:0.29px;letter-spacing:-0.27px;">36K</span><span class="t" style="left:1918.8px;top:1201.68px;font-size:31.93px;line-height:40px;color:#5e5e5e;-webkit-text-stroke:0.29px;letter-spacing:-0.42px;">27K</span><span class="t" style="left:1920.2px;top:1377.38px;font-size:31.93px;line-height:40px;color:#5e5e5e;-webkit-text-stroke:0.29px;letter-spacing:-1.12px;">18K</span><span class="t" style="left:1936.8px;top:1552.88px;font-size:31.93px;line-height:40px;color:#5e5e5e;-webkit-text-stroke:0.29px;letter-spacing:-1.12px;">9K</span><span class="t" style="left:1957.08px;top:1728.58px;font-size:31.93px;line-height:40px;color:#5e5e5e;-webkit-text-stroke:0.29px;">0</span><div class="b" style="left:2018px;top:1061px;width:913px;height:2px;background:#1f1f1f;"></div><div class="b" style="left:2018px;top:1238.2px;width:913px;height:2px;background:#1f1f1f;"></div><div class="b" style="left:2018px;top:1415px;width:913px;height:2px;background:#1f1f1f;"></div><div class="b" style="left:2018px;top:1592px;width:913px;height:2px;background:#1f1f1f;"></div><div class="b" style="left:2018px;top:1769.4px;width:913.8px;height:2.2px;background:#464646;"></div><span class="t" style="left:2050.75px;top:1808.48px;font-size:31.93px;line-height:40px;color:#666;-webkit-text-stroke:0.29px;letter-spacing:1.2px;">Mon</span><span class="t" style="left:2187px;top:1808.48px;font-size:31.93px;line-height:40px;color:#666;-webkit-text-stroke:0.29px;letter-spacing:0.1px;">Tue</span><span class="t" style="left:2311.2px;top:1808.48px;font-size:31.93px;line-height:40px;color:#666;-webkit-text-stroke:0.29px;letter-spacing:0.43px;">Wed</span><span class="t" style="left:2446.5px;top:1808.48px;font-size:31.93px;line-height:40px;color:#666;-webkit-text-stroke:0.29px;letter-spacing:0.96px;">Thu</span><span class="t" style="left:2586.7px;top:1808.48px;font-size:31.93px;line-height:40px;color:#666;-webkit-text-stroke:0.29px;letter-spacing:-0.1px;">Fri</span><span class="t" style="left:2710.5px;top:1808.48px;font-size:31.93px;line-height:40px;color:#666;-webkit-text-stroke:0.29px;letter-spacing:1.55px;">Sat</span><span class="t" style="left:2838.05px;top:1808.48px;font-size:31.93px;line-height:40px;color:#666;-webkit-text-stroke:0.29px;letter-spacing:-0.17px;">Sun</span><svg class="b" style="left:2018px;top:1080px;width:913px;height:690px;" viewBox="2018 1080 913 690"><path d="M2088.6 1513.1 C2109.2 1483.0 2125.2 1445.7 2145.8 1445.7 C2156.7 1445.7 2165.2 1464.1 2176.1 1471.2 C2185.6 1477.4 2193.0 1482.9 2202.5 1482.9 C2212.4 1482.9 2220.1 1461.3 2230.0 1442.0 C2240.2 1422.2 2248.0 1412.5 2258.2 1412.5 C2265.6 1412.5 2271.4 1423.5 2278.8 1427.2 C2286.2 1430.9 2291.9 1433.0 2299.3 1433.0 C2306.7 1433.0 2312.4 1422.8 2319.8 1418.4 C2326.7 1414.3 2332.0 1410.2 2338.9 1410.2 C2347.9 1410.2 2354.8 1417.1 2363.8 1419.8 C2373.3 1422.7 2380.8 1424.8 2390.3 1424.8 C2406.4 1424.8 2418.9 1414.7 2435.0 1405.0 C2445.8 1398.5 2454.2 1389.6 2465.0 1381.0 C2480.7 1368.4 2493.0 1362.4 2508.7 1358.2 C2520.3 1355.1 2529.4 1353.8 2541.0 1353.8 C2560.0 1353.8 2574.8 1358.2 2593.8 1358.2 C2605.4 1358.2 2614.4 1357.3 2626.0 1353.8 C2636.6 1350.6 2644.8 1347.2 2655.4 1337.7 C2666.8 1327.5 2675.6 1312.2 2687.0 1294.0 C2698.9 1275.0 2708.1 1262.7 2720.0 1252.6 C2733.2 1241.4 2743.4 1236.4 2756.6 1236.4 C2767.7 1236.4 2776.3 1245.2 2787.4 1245.2 C2801.2 1245.2 2811.8 1234.6 2825.6 1218.8 C2843.6 1198.1 2857.5 1173.0 2875.5 1142.5" fill="none" stroke="#e6e6e6" stroke-width="7" stroke-linecap="round" stroke-linejoin="round"/><path d="M2061.0 1473.5 C2088.7 1420.9 2110.2 1397.0 2137.9 1397.0 C2164.3 1397.0 2184.9 1415.8 2211.3 1446.2 C2229.3 1466.9 2243.2 1487.9 2261.2 1487.9 C2279.1 1487.9 2293.1 1429.0 2311.0 1386.0 C2333.2 1332.7 2350.5 1303.0 2372.7 1303.0 C2384.7 1303.0 2394.0 1320.6 2406.0 1338.0 C2418.1 1355.5 2427.5 1369.4 2439.6 1369.4 C2450.5 1369.4 2459.1 1346.6 2470.0 1328.0 C2487.6 1298.0 2501.4 1286.3 2519.0 1286.3 C2532.0 1286.3 2542.0 1293.8 2555.0 1299.0 C2567.9 1304.2 2577.9 1307.7 2590.8 1307.7 C2608.8 1307.7 2622.7 1282.6 2640.7 1252.6 C2653.4 1231.4 2663.2 1220.9 2675.9 1213.0 C2688.6 1205.1 2698.5 1200.6 2711.2 1200.6 C2721.2 1200.6 2729.0 1204.5 2739.0 1209.0 C2748.5 1213.3 2755.9 1217.4 2765.4 1217.4 C2777.9 1217.4 2787.5 1213.6 2800.0 1200.5 C2810.8 1189.2 2819.2 1177.8 2830.0 1177.8 C2847.4 1177.8 2861.0 1200.0 2878.4 1221.8" fill="none" stroke="#3f87fb" stroke-width="7" stroke-linecap="round" stroke-linejoin="round"/></svg><div class="b" style="left:634.5px;top:2002.5px;width:2360.3px;height:545.5px;background:#141414;border-radius:40px 40px 0 0;"></div><span class="t" style="left:699.3px;top:2070.43px;font-size:36px;line-height:45px;color:#e8e8e8;font-weight:700;letter-spacing:0.81px;">Assigned Tasks</span><span class="t" style="left:699.3px;top:2173px;font-size:32.96px;line-height:41px;color:#6c6c6c;-webkit-text-stroke:0.3px;letter-spacing:0.35px;">Assigned to</span><span class="t" style="left:1397.6px;top:2173px;font-size:32.96px;line-height:41px;color:#6c6c6c;-webkit-text-stroke:0.3px;letter-spacing:0.57px;">Task</span><span class="t" style="left:1908.9px;top:2173px;font-size:32.96px;line-height:41px;color:#6c6c6c;-webkit-text-stroke:0.3px;letter-spacing:0.27px;">Project</span><span class="t" style="left:2436.6px;top:2173px;font-size:32.96px;line-height:41px;color:#6c6c6c;-webkit-text-stroke:0.3px;letter-spacing:0.41px;">Status</span><div class="b" style="left:698.8px;top:2243.6px;width:2232px;height:2.2px;background:#3c3c3c;"></div><span class="t" style="left:794.8px;top:2278.9px;font-size:32.96px;line-height:41px;color:#e6e6e6;-webkit-text-stroke:0.3px;letter-spacing:0.24px;">Sarah Thompson</span><span class="t" style="left:1397.6px;top:2278.9px;font-size:32.96px;line-height:41px;color:#e6e6e6;-webkit-text-stroke:0.3px;letter-spacing:0.37px;">Design company brochure</span><span class="t" style="left:1908.9px;top:2278.9px;font-size:32.96px;line-height:41px;color:#e6e6e6;-webkit-text-stroke:0.3px;letter-spacing:0.43px;">Marketing Rebrand Campaign</span><div class="b" style="left:2437.8px;top:2290.8px;width:16px;height:16px;background:#7c9ff6;border-radius:8px;"></div><span class="t" style="left:2468.1px;top:2278.9px;font-size:32.96px;line-height:41px;color:#8f9fe8;-webkit-text-stroke:0.3px;letter-spacing:-0.15px;">In Progress</span><span class="t" style="left:794.8px;top:2384.6px;font-size:32.96px;line-height:41px;color:#e6e6e6;-webkit-text-stroke:0.3px;letter-spacing:0.34px;">Michael Patin</span><span class="t" style="left:1397.6px;top:2384.6px;font-size:32.96px;line-height:41px;color:#e6e6e6;-webkit-text-stroke:0.3px;letter-spacing:0.41px;">Conduct Q4 Financial Analysis</span><span class="t" style="left:1908.9px;top:2384.6px;font-size:32.96px;line-height:41px;color:#e6e6e6;-webkit-text-stroke:0.3px;letter-spacing:0.24px;">Annual Budget Planning</span><div class="b" style="left:2437.8px;top:2396.5px;width:16px;height:16px;background:#fdc75c;border-radius:8px;"></div><span class="t" style="left:2468.1px;top:2384.6px;font-size:32.96px;line-height:41px;color:#f6bd58;-webkit-text-stroke:0.3px;letter-spacing:-0.12px;">Pending Review</span><span class="t" style="left:794.8px;top:2490.2px;font-size:32.96px;line-height:41px;color:#e6e6e6;-webkit-text-stroke:0.3px;letter-spacing:0.27px;">Jessica Nguyen</span><span class="t" style="left:1397.6px;top:2490.2px;font-size:32.96px;line-height:41px;color:#e6e6e6;-webkit-text-stroke:0.3px;letter-spacing:0.45px;">Review customer feedback</span><span class="t" style="left:1908.9px;top:2490.2px;font-size:32.96px;line-height:41px;color:#e6e6e6;-webkit-text-stroke:0.3px;letter-spacing:0.37px;">Product Launch Feedback</span><div class="b" style="left:2437.8px;top:2502.1px;width:16px;height:16px;background:#a2c6b6;border-radius:8px;"></div><span class="t" style="left:2468.1px;top:2490.2px;font-size:32.96px;line-height:41px;color:#5fc9a5;-webkit-text-stroke:0.3px;letter-spacing:0.33px;">Competed</span><svg class="b" style="left:708.6px;top:2266.4px;width:64px;height:64px;" viewBox="0 0 64 64"><defs><clipPath id="avs1"><circle cx="32" cy="32" r="32"/></clipPath><filter id="avs1f" x="-10%" y="-10%" width="120%" height="120%"><feGaussianBlur stdDeviation="0.45"/></filter></defs><g clip-path="url(#avs1)"><rect width="64" height="64" fill="#a9a8a6"/><g filter="url(#avs1f)"><path d="M9 53 Q12 36 17 22 Q21 9 32 8 Q44 8 48 20 Q55 34 57 50 L52 56 L44 60 L20 64 L10 58 Z" fill="#7c4b31"/><path d="M9.5 53 Q13 36 17.5 22 Q19 17 23 15 L28 20 Q25 34 25 54 L14 57 Z" fill="#b78d65"/><path d="M20 24 Q22 40 19 54 L22.5 54 Q25 38 23 24 Z" fill="#c8c2ba"/><path d="M13 44 Q15 32 18 24 L19.5 26 Q17 36 16 50 Z" fill="#7c4b31"/><path d="M25.5 22 Q24 36 25 52 L27.5 50 Q27 36 28.5 24 Z" fill="#7c4b31"/><path d="M21.5 17 Q24 9 32 8.2 Q42 8 46 16 Q50 24 50.5 29 L46 27 Q43 19 36 16.5 Q30 15 27 20 Q24 24 23.5 28 Z" fill="#2d2c2b"/><path d="M31 18 Q36 15 39 20 Q42 26 41 32 L45 36 Q47 44 42 49 Q38 52 34 50 Q28 46 28 37 Q27 27 31 18 Z" fill="#b78d65"/><path d="M38.5 27 Q44 26 46 33 Q48 42 43 48 Q41 44 41 38 Q41 32 38.5 27 Z" fill="#7c4b31"/><path d="M37 27 Q42 24.5 45.5 30 Q42 27.5 38 29 Z" fill="#2d2c2b"/><path d="M28 36 Q29 30 31.5 27.5 Q29 34 29.5 42 Z" fill="#2d2c2b"/><path d="M48 38 Q51 44 48.5 51 L45.5 50 Q48.5 45 47 39 Z" fill="#2d2c2b"/><path d="M25 46 Q29 52 35 51 L38 55 L37 64 L24.5 64 Q23.5 54 25 46 Z" fill="#7c4b31"/><path d="M40 48 Q44 44 47 40 L48 46 Q45 52 41 55 Z" fill="#b78d65"/><path d="M36 59 Q42 56 49 57.5 L47 63 L36.5 64 Z" fill="#d9d9d9"/><path d="M8 53 Q14 55 22 60 L22 64 L8 62 Z" fill="#c9c9c9"/></g></g></svg><svg class="b" style="left:708.6px;top:2372.5px;width:64px;height:64px;" viewBox="0 0 64 64"><circle cx="32" cy="32" r="32" fill="#e4e4e4"/><circle cx="32" cy="25.8" r="12.7" fill="#080808"/><path d="M13.8 48 Q15 44 20 41 Q26 37.2 32 37.2 Q38 37.2 44 41 Q49.5 44 50.8 48 Q50.8 49 49.8 49 H14.8 Q13.8 49 13.8 48 Z" fill="#080808"/></svg><svg class="b" style="left:708.6px;top:2478px;width:64px;height:64px;" viewBox="0 0 64 64"><defs><clipPath id="avj1"><circle cx="32" cy="32" r="32"/></clipPath><filter id="avj1f" x="-10%" y="-10%" width="120%" height="120%"><feGaussianBlur stdDeviation="0.8"/></filter></defs><g clip-path="url(#avj1)"><rect width="64" height="64" fill="#8e8e8e"/><g filter="url(#avj1f)"><rect x="40" width="24" height="64" fill="#9a9a9a"/><path d="M12 62 Q10 34 18 18 Q24 6 33 7 Q44 8 49 22 Q55 40 56 58 L44 64 L16 64 Z" fill="#2c2c2c"/><path d="M21 26 Q24 15 32 16 Q41 17 42 30 Q42 42 36 48 Q31 51 26 46 Q20 38 21 26 Z" fill="#c9c9c9"/><path d="M21 26 Q26 18 33 19 Q28 24 26 32 Q22 34 21 26 Z" fill="#3a3a3a"/><path d="M27 48 L36 49 L38 58 L26 58 Z" fill="#a8a8a8"/><path d="M26 58 Q36 53 48 58 L50 64 L24 64 Z" fill="#ececec"/><ellipse cx="30.5" cy="41" rx="3.4" ry="1.5" fill="#6a6a6a"/><path d="M24 30 h5 M33 30 h5" stroke="#444" stroke-width="1.6"/></g></g></svg></main><aside id="panel"><div class="b" style="left:3099px;top:0px;width:2px;height:2548px;background:#262626;"></div><div class="b" style="left:3151.7px;top:31.3px;width:630.6px;height:127.5px;background:#ffffff;border-radius:40px;"></div><svg class="b" style="left:3177.71px;top:73.07px;width:50.28px;height:44.69px;" viewBox="135 190 180 160"><g fill="none" stroke="#111" stroke-width="11" stroke-linejoin="round" stroke-linecap="round"><rect x="152.3" y="209.8" width="142" height="117" rx="7"/><path d="M193.7 210 V327"/><path d="M156 234.1 H169 M156 257.5 H169 M156 281 H169" stroke-width="10.5"/></g></svg><svg class="b" style="left:3279.66px;top:67.49px;width:55.87px;height:55.87px;" viewBox="500 170 200 200"><g fill="none" stroke="#111" stroke-width="12.5" stroke-linecap="round"><circle cx="601.8" cy="268.5" r="44.4"/><path d="M668.8 268.5 L689.8 268.5" stroke-width="11.5"/><path d="M649.2 315.9 L664.0 330.7" stroke-width="11.5"/><path d="M601.8 335.5 L601.8 356.5" stroke-width="11.5"/><path d="M554.4 315.9 L539.6 330.7" stroke-width="11.5"/><path d="M534.8 268.5 L513.8 268.5" stroke-width="11.5"/><path d="M554.4 221.1 L539.6 206.3" stroke-width="11.5"/><path d="M601.8 201.5 L601.8 180.5" stroke-width="11.5"/><path d="M649.2 221.1 L664.0 206.3" stroke-width="11.5"/></g></svg><svg class="b" style="left:3385.81px;top:66.09px;width:58.66px;height:55.87px;" viewBox="880 165 210 200"><g fill="none" stroke="#111" stroke-width="16.5" stroke-linecap="round" stroke-linejoin="round"><path d="M1048.7 305.1 A78 78 0 1 0 1016.4 337.4 L1056 342 Z"/></g><circle cx="956.2" cy="268.5" r="15" fill="#111"/><circle cx="1003.8" cy="268.5" r="15" fill="#111"/><circle cx="1043.6" cy="205.9" r="30.8" fill="#f26b63"/></svg><svg class="b" style="left:3494.75px;top:66.09px;width:55.87px;height:55.87px;" viewBox="1270 165 200 200"><circle cx="1358.5" cy="205.7" r="17.3" fill="#111"/><path d="M1334.5 339 A24 17 0 0 0 1382.5 339 Z" fill="#111"/><g fill="#fff" stroke="#111" stroke-width="16" stroke-linecap="round" stroke-linejoin="round"><path d="M1297 331.6 C1308 318 1311.7 300 1311.7 266 C1311.7 236 1332 219 1359.4 219 C1387 219 1407.1 236 1407.1 266 C1407.1 300 1411 318 1424.4 331.6 Z"/></g><circle cx="1415.3" cy="205.7" r="30.8" fill="#f26b63"/></svg><svg class="b" style="left:3589.2px;top:58.6px;width:72.6px;height:72.6px;" viewBox="0 0 64 64"><defs><clipPath id="avs2"><circle cx="32" cy="32" r="32"/></clipPath><filter id="avs2f" x="-10%" y="-10%" width="120%" height="120%"><feGaussianBlur stdDeviation="0.45"/></filter></defs><g clip-path="url(#avs2)"><rect width="64" height="64" fill="#a9a8a6"/><g filter="url(#avs2f)"><path d="M9 53 Q12 36 17 22 Q21 9 32 8 Q44 8 48 20 Q55 34 57 50 L52 56 L44 60 L20 64 L10 58 Z" fill="#7c4b31"/><path d="M9.5 53 Q13 36 17.5 22 Q19 17 23 15 L28 20 Q25 34 25 54 L14 57 Z" fill="#b78d65"/><path d="M20 24 Q22 40 19 54 L22.5 54 Q25 38 23 24 Z" fill="#c8c2ba"/><path d="M13 44 Q15 32 18 24 L19.5 26 Q17 36 16 50 Z" fill="#7c4b31"/><path d="M25.5 22 Q24 36 25 52 L27.5 50 Q27 36 28.5 24 Z" fill="#7c4b31"/><path d="M21.5 17 Q24 9 32 8.2 Q42 8 46 16 Q50 24 50.5 29 L46 27 Q43 19 36 16.5 Q30 15 27 20 Q24 24 23.5 28 Z" fill="#2d2c2b"/><path d="M31 18 Q36 15 39 20 Q42 26 41 32 L45 36 Q47 44 42 49 Q38 52 34 50 Q28 46 28 37 Q27 27 31 18 Z" fill="#b78d65"/><path d="M38.5 27 Q44 26 46 33 Q48 42 43 48 Q41 44 41 38 Q41 32 38.5 27 Z" fill="#7c4b31"/><path d="M37 27 Q42 24.5 45.5 30 Q42 27.5 38 29 Z" fill="#2d2c2b"/><path d="M28 36 Q29 30 31.5 27.5 Q29 34 29.5 42 Z" fill="#2d2c2b"/><path d="M48 38 Q51 44 48.5 51 L45.5 50 Q48.5 45 47 39 Z" fill="#2d2c2b"/><path d="M25 46 Q29 52 35 51 L38 55 L37 64 L24.5 64 Q23.5 54 25 46 Z" fill="#7c4b31"/><path d="M40 48 Q44 44 47 40 L48 46 Q45 52 41 55 Z" fill="#b78d65"/><path d="M36 59 Q42 56 49 57.5 L47 63 L36.5 64 Z" fill="#d9d9d9"/><path d="M8 53 Q14 55 22 60 L22 64 L8 62 Z" fill="#c9c9c9"/></g></g></svg><svg class="b" style="left:3709.83px;top:81.45px;width:44.69px;height:30.73px;" viewBox="2040 220 160 110"><path d="M2068 242 H2168 L2118 308 Z" fill="#111" stroke="#111" stroke-width="8" stroke-linejoin="round"/></svg><span class="t" style="left:3163.2px;top:234.46px;font-size:38px;line-height:48px;color:#ececec;font-weight:700;letter-spacing:-0.26px;">Notifications</span><span class="t" style="left:3248.7px;top:341.07px;font-size:39.14px;line-height:49px;color:#e6e6e6;-webkit-text-stroke:0.35px;letter-spacing:-0.85px;">Sale $61.80</span><span class="t" style="left:3248.7px;top:396px;font-size:32.96px;line-height:41px;color:#6c6c6c;-webkit-text-stroke:0.3px;letter-spacing:-0.35px;">11:04 AM</span><svg class="b" style="left:3162.6px;top:338.6px;width:63px;height:63.4px;" viewBox="118 97 329 331"><rect x="118" y="97" width="329" height="331" rx="85" fill="#121212"/><g fill="none" stroke="#e6e6e6" stroke-width="17" stroke-linejoin="round" stroke-linecap="round"><rect x="169" y="167" width="231" height="193" rx="8"/><path d="M169 207 H400"/><path d="M236 243 A49 49 0 0 0 334 243"/></g></svg><span class="t" style="left:3248.7px;top:484.17px;font-size:39.14px;line-height:49px;color:#e6e6e6;-webkit-text-stroke:0.35px;letter-spacing:0.13px;">3 New Subscribers</span><span class="t" style="left:3248.7px;top:539.1px;font-size:32.96px;line-height:41px;color:#6c6c6c;-webkit-text-stroke:0.3px;letter-spacing:-0.11px;">10:59 AM</span><svg class="b" style="left:3162.6px;top:482.1px;width:63px;height:62.4px;" viewBox="118 848 329 326"><rect x="118" y="848" width="329" height="326" rx="85" fill="#121212"/><g fill="none" stroke="#f0f0f0" stroke-width="19" stroke-linejoin="round" stroke-linecap="round"><circle cx="284" cy="982" r="58"/><path d="M198 1090 Q284 990 370 1090"/></g></svg><span class="t" style="left:3248.7px;top:627.27px;font-size:39.14px;line-height:49px;color:#e6e6e6;-webkit-text-stroke:0.35px;letter-spacing:-0.1px;">Sale $43.50</span><span class="t" style="left:3248.7px;top:682.2px;font-size:32.96px;line-height:41px;color:#6c6c6c;-webkit-text-stroke:0.3px;letter-spacing:-0.11px;">10:59 AM</span><svg class="b" style="left:3162.6px;top:624.8px;width:63px;height:63.4px;" viewBox="118 97 329 331"><rect x="118" y="97" width="329" height="331" rx="85" fill="#121212"/><g fill="none" stroke="#e6e6e6" stroke-width="17" stroke-linejoin="round" stroke-linecap="round"><rect x="169" y="167" width="231" height="193" rx="8"/><path d="M169 207 H400"/><path d="M236 243 A49 49 0 0 0 334 243"/></g></svg><span class="t" style="left:3248.7px;top:770.37px;font-size:39.14px;line-height:49px;color:#e6e6e6;-webkit-text-stroke:0.35px;letter-spacing:-0.17px;">Order Fulfilled ...855</span><span class="t" style="left:3248.7px;top:825.3px;font-size:32.96px;line-height:41px;color:#6c6c6c;-webkit-text-stroke:0.3px;letter-spacing:-0.18px;">10:55 AM</span><svg class="b" style="left:3162.6px;top:767.9px;width:63px;height:63.4px;" viewBox="118 97 329 331"><rect x="118" y="97" width="329" height="331" rx="85" fill="#121212"/><g fill="none" stroke="#e6e6e6" stroke-width="17" stroke-linejoin="round" stroke-linecap="round"><rect x="169" y="167" width="231" height="193" rx="8"/><path d="M169 207 H400"/><path d="M236 243 A49 49 0 0 0 334 243"/></g></svg><span class="t" style="left:3163.2px;top:954.86px;font-size:38px;line-height:48px;color:#ececec;font-weight:700;letter-spacing:-0.54px;">Company Projections</span><span class="t" style="left:3163.2px;top:1061.17px;font-size:39.14px;line-height:49px;color:#e6e6e6;-webkit-text-stroke:0.35px;letter-spacing:-0.01px;">Surpass 500K Website Visitors</span><span class="t" style="left:3163.2px;top:1116.3px;font-size:32.96px;line-height:41px;color:#6c6c6c;-webkit-text-stroke:0.3px;letter-spacing:0.27px;">Monday, March 10, 2025</span><span class="t" style="left:3163.2px;top:1204.77px;font-size:39.14px;line-height:49px;color:#e6e6e6;-webkit-text-stroke:0.35px;letter-spacing:-0.8px;">Reach 1M Social Shares</span><span class="t" style="left:3163.2px;top:1259.9px;font-size:32.96px;line-height:41px;color:#6c6c6c;-webkit-text-stroke:0.3px;letter-spacing:0.33px;">Friday, June 20, 2025</span><span class="t" style="left:3163.2px;top:1348.37px;font-size:39.14px;line-height:49px;color:#e6e6e6;-webkit-text-stroke:0.35px;letter-spacing:-0.31px;">Surpass $200K in Online Sales</span><span class="t" style="left:3163.2px;top:1403.5px;font-size:32.96px;line-height:41px;color:#6c6c6c;-webkit-text-stroke:0.3px;letter-spacing:0.26px;">Thursday, July 31, 2025</span><span class="t" style="left:3163.2px;top:1491.97px;font-size:39.14px;line-height:49px;color:#e6e6e6;-webkit-text-stroke:0.35px;letter-spacing:-0.36px;">Reach 250K Email Subscribers</span><span class="t" style="left:3163.2px;top:1547.1px;font-size:32.96px;line-height:41px;color:#6c6c6c;-webkit-text-stroke:0.3px;letter-spacing:0.03px;">Friday, October 17, 2025</span><svg class="b" style="left:3161px;top:1675px;width:55.5px;height:55.5px;" viewBox="66 128 222 222"><defs><linearGradient id="ag2" x1="0" y1="0" x2="1" y2="1"><stop offset="0" stop-color="#9078da"/><stop offset=".4" stop-color="#2c66c6"/><stop offset=".75" stop-color="#2a7fd0"/><stop offset="1" stop-color="#1fcdf2"/></linearGradient></defs><g fill="none" stroke="url(#ag2)" stroke-width="18" stroke-linejoin="round" stroke-linecap="round"><path d="M82 138 H220 Q226 138 226 144 V240 Q226 246 220 246 H122 L76 286 V144 Q76 138 82 138 Z"/><path d="M236 190 H272 Q278 190 278 196 V336 L234 298 H132 Q126 298 126 292 V258"/></g></svg><span class="t" style="left:3231.8px;top:1679.53px;font-size:36px;line-height:45px;color:#ececec;font-weight:700;letter-spacing:-1.01px;">ARIA</span><svg class="b" style="left:3696px;top:1698px;width:24px;height:8px;" viewBox="0 0 24 8"><circle cx="3.6" cy="4" r="2" fill="#8a8a8a"/><circle cx="11.8" cy="4" r="2" fill="#8a8a8a"/><circle cx="20" cy="4" r="2" fill="#8a8a8a"/></svg><svg class="b" style="left:3752px;top:1689.4px;width:25.6px;height:25.6px;" viewBox="0 0 25.6 25.6"><circle cx="12.8" cy="12.8" r="12.8" fill="#4c4c4c"/><path d="M8.6 8.6 L17 17 M17 8.6 L8.6 17" stroke="#141414" stroke-width="1.9" stroke-linecap="round"/></svg><div class="b" style="left:3265.3px;top:1779.6px;width:539.9px;height:114.6px;background:#3f87fb;border-radius:24px 34px 5px 24px;"></div><span class="t" style="left:3297.9px;top:1806.29px;font-size:24.21px;line-height:30px;color:#f4f4f4;-webkit-text-stroke:0.22px;letter-spacing:-0.17px;">how did our recent social media campaign</span><span class="t" style="left:3297.9px;top:1837.69px;font-size:24.21px;line-height:30px;color:#f4f4f4;-webkit-text-stroke:0.22px;letter-spacing:-0.32px;">for our business perform?</span><div class="b" style="left:3700px;top:2160px;width:106px;height:115.2px;background:#3f87fb;border-radius:24px 34px 6px 24px;"></div><div class="b" style="left:3192.5px;top:1919.6px;width:571px;height:469.4px;background:#141414;border-radius:32px 32px 30px 0;overflow:hidden;"><div class="b" style="left:0;bottom:0;width:561px;height:5.6px;background:linear-gradient(90deg,#7a90ee 0%,#8a9df0 12%,#b3bdf0 25%,#d4d7e8 38%,#e6e6ea 48%,#eeeeee 75%,#dfe2f2 83%,#9fb0f2 90%,#7f96f0 100%);border-radius:0 0 14px 0"></div></div><span class="t" style="left:3225px;top:1946.39px;font-size:24.21px;line-height:30px;color:#ececec;-webkit-text-stroke:0.22px;letter-spacing:-0.16px;">Here's a quick overview of the campaign</span><span class="t" style="left:3225px;top:1977.49px;font-size:24.21px;line-height:30px;color:#ececec;-webkit-text-stroke:0.22px;letter-spacing:-0.25px;">metrics:</span><span class="t" style="left:3258.3px;top:2040.79px;font-size:24.21px;line-height:30px;color:#ececec;-webkit-text-stroke:0.22px;letter-spacing:-0.74px;">Engagement Rate: 6.5%</span><div class="b" style="left:3237.6px;top:2053.4px;width:7.2px;height:7.2px;background:#ececec;border-radius:4px;"></div><span class="t" style="left:3258.3px;top:2091.29px;font-size:24.21px;line-height:30px;color:#ececec;-webkit-text-stroke:0.22px;letter-spacing:-0.43px;">Reach: 45,000 unique users</span><div class="b" style="left:3237.6px;top:2103.9px;width:7.2px;height:7.2px;background:#ececec;border-radius:4px;"></div><span class="t" style="left:3258.3px;top:2142.39px;font-size:24.21px;line-height:30px;color:#ececec;-webkit-text-stroke:0.22px;letter-spacing:-0.27px;">Top Performing Post: Instagram carousel on</span><div class="b" style="left:3237.6px;top:2155px;width:7.2px;height:7.2px;background:#ececec;border-radius:4px;"></div><span class="t" style="left:3258.3px;top:2173.79px;font-size:24.21px;line-height:30px;color:#ececec;-webkit-text-stroke:0.22px;letter-spacing:-0.29px;">September 5th (8.2% engagement rate)</span><span class="t" style="left:3258.3px;top:2224.79px;font-size:24.21px;line-height:30px;color:#ececec;-webkit-text-stroke:0.22px;letter-spacing:-0.47px;">Followers Gained: 1,250 new followers</span><div class="b" style="left:3237.6px;top:2237.4px;width:7.2px;height:7.2px;background:#ececec;border-radius:4px;"></div><div class="b" style="left:3224.7px;top:2281.7px;width:282.1px;height:18.3px;background:#1d1d1d;border-radius:10px 10px 0 0;"></div><div class="b" style="left:3224.7px;top:2281.7px;width:535.3px;height:18.5px;background:transparent;overflow:hidden;"><span class="t" style="left:45px;top:8px;font-size:23.5px;line-height:30px;color:#d8d8d8;letter-spacing:1.2px">Regenerate response</span><svg class="b" style="left:13px;top:11px;width:22px;height:18px" viewBox="0 0 22 18"><path d="M2 9 H20 M2 9 L9 2 M2 9 L9 16" fill="none" stroke="#d0d0d0" stroke-width="2"/></svg><svg class="b" style="left:421px;top:8px;width:22px;height:22px" viewBox="0 0 22 22"><path d="M2 12 L8 2 Q12 2 11 7 L10 10 H20" fill="none" stroke="#d8d8d8" stroke-width="2"/></svg><svg class="b" style="left:471px;top:10px;width:28px;height:22px" viewBox="0 0 28 22"><path d="M1 20 V1 H27 V20 M9 1 V20" fill="none" stroke="#d8d8d8" stroke-width="2"/></svg></div><svg class="b" style="left:3222px;top:2329.6px;width:38px;height:34px;" viewBox="0 0 38 34"><path d="M9 27 L17 19" stroke="#4a8df8" stroke-width="5.4" stroke-linecap="round"/><path d="M9 27 L12 24" stroke="#dfe9ff" stroke-width="2" stroke-linecap="round"/><circle cx="22" cy="14" r="12.6" fill="#4a8df8" stroke="#dfe9ff" stroke-width="2"/><circle cx="25.5" cy="10" r="4" fill="#78aaff" opacity=".8"/></svg><span class="t" style="left:3276px;top:2328.7px;font-size:24.72px;line-height:31px;color:#ececec;-webkit-text-stroke:0.22px;letter-spacing:-0.38px;">Analyzing the data...</span><svg class="b" style="left:3381px;top:2417.6px;width:22px;height:22px;" viewBox="0 0 22 22"><rect x="1.2" y="1.2" width="15" height="17" rx="3.5" fill="none" stroke="#6a6a6a" stroke-width="2"/><circle cx="14.5" cy="14.5" r="6.8" fill="#6a6a6a" stroke="#0d0d0d" stroke-width="1.2"/><path d="M12.3 12.3 L16.7 16.7 M16.7 12.3 L12.3 16.7" stroke="#0d0d0d" stroke-width="1.3"/></svg><span class="t" style="left:3410.9px;top:2412.29px;font-size:24.21px;line-height:30px;color:#6a6a6a;-webkit-text-stroke:0.22px;letter-spacing:-0.28px;">Stop generating</span><div class="b" style="left:3176.5px;top:2488.2px;width:571.3px;height:59.8px;background:#0e0e0e;border-radius:30px 30px 0 0;border:2px solid #202020;border-bottom:0;box-sizing:border-box;"></div></aside></body></html>
